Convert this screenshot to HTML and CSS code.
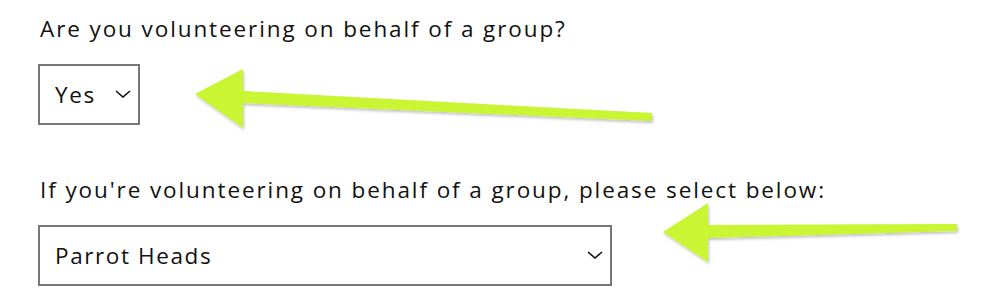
FILE: index.html
```html
<!DOCTYPE html>
<html lang="en">
<head>
<meta charset="UTF-8">
<title>Volunteer group</title>
<link rel="stylesheet" href="styles.css">
</head>
<body>
<div class="form">
  <div class="field">
    <label class="field-label" for="group">Are you volunteering on behalf of a group?</label>
    <div class="select-wrap select-small">
      <select id="group" class="select">
        <option>Yes</option>
        <option>No</option>
      </select>
      <svg class="chevron" width="16" height="8" viewBox="0 0 16 8"><path d="M1 1 L8 7 L15 1" fill="none" stroke="#111" stroke-width="1.6"/></svg>
    </div>
  </div>
  <div class="field">
    <label class="field-label" for="groupName">If you're volunteering on behalf of a group, please select below:</label>
    <div class="select-wrap select-wide">
      <select id="groupName" class="select">
        <option>Parrot Heads</option>
      </select>
      <svg class="chevron" width="16" height="8" viewBox="0 0 16 8"><path d="M1 1 L8 7 L15 1" fill="none" stroke="#111" stroke-width="1.6"/></svg>
    </div>
  </div>
</div>

<!-- highlight arrows drawn over the form -->
<svg class="arrows" width="989" height="308" viewBox="0 0 989 308">
  <defs>
    <filter id="shadow" x="-5%" y="-20%" width="110%" height="140%">
      <feDropShadow dx="1" dy="2" stdDeviation="1.5" flood-color="#000" flood-opacity="0.25"/>
    </filter>
  </defs>
  <g fill="#c9f531" filter="url(#shadow)">
    <polygon points="195,94 243,69 243,91 652,113 652,121 243,103 243,128"/>
    <polygon points="663,232 708,203 708,225 957,224 957,231 708,238 708,262"/>
  </g>
</svg>
</body>
</html>
```

FILE: styles.css
```css
body {
  margin: 0;
  padding: 0;
  background-color: #fff;
  font-family: 'Open Sans', 'Noto Sans', sans-serif;
  color: #111;
}
.form {
  padding: 14px 0 0 40px;
}
.field {
  margin-bottom: 50px;
}
.field:last-child {
  margin-bottom: 0;
}
.field-label {
  display: block;
  font-size: 22.5px;
  letter-spacing: 1.9px;
  line-height: 30px;
  margin-bottom: 20px;
}
.select-wrap {
  position: relative;
}
.select-small {
  width: 102px;
  margin-left: -2px;
}
.select-wide {
  width: 574px;
  margin-left: -2px;
}
.select {
  appearance: none;
  -webkit-appearance: none;
  display: block;
  width: 100%;
  height: 61px;
  box-sizing: border-box;
  border: 2px solid #777;
  border-radius: 0;
  background-color: #fff;
  font-family: inherit;
  font-size: 22.5px;
  letter-spacing: 1.6px;
  color: #111;
  padding: 0 0 0 15px;
}
.chevron {
  position: absolute;
  right: 9px;
  top: 26px;
  pointer-events: none;
}
.arrows {
  position: absolute;
  top: 0;
  left: 0;
  pointer-events: none;
}
```
